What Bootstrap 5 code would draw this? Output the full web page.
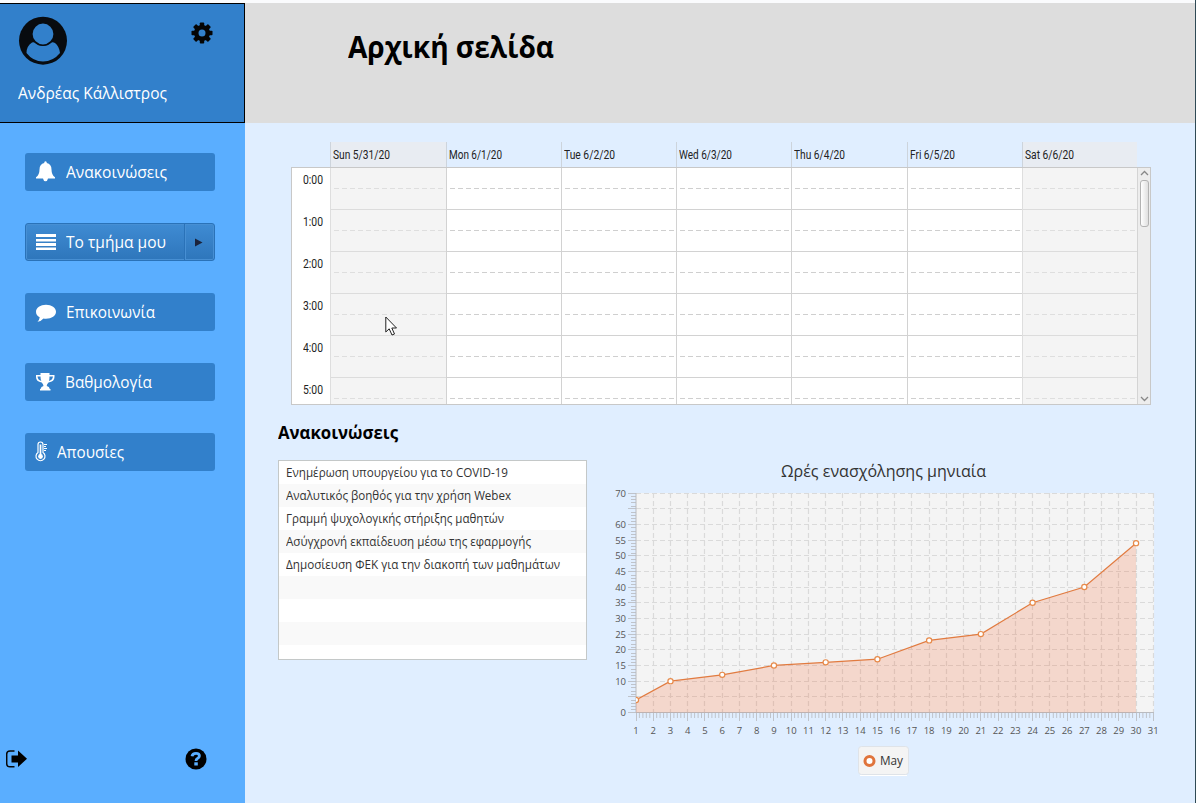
<!DOCTYPE html>
<html lang="el">
<head>
<meta charset="utf-8">
<meta name="viewport" content="width=device-width, initial-scale=1">
<title>Αρχική σελίδα</title>
<link href="https://cdn.jsdelivr.net/npm/bootstrap@5.3.0/dist/css/bootstrap.min.css" rel="stylesheet">
<style>
body{font-family:"Open Sans","Noto Sans",sans-serif;background:#e0eeff;height:803px;overflow:hidden;color:#000;line-height:1}
svg{display:block}
.fit{display:inline-block;white-space:nowrap;transform-origin:0 50%}
.app-shell{height:803px;padding-top:3px;background:#fafbfd;border-right:1px solid #2f4a55}
.side{width:245px;background:#5aaeff}
.profile{height:120px;background:#3280cb;border:1px solid #000;border-left:0;padding:12px 31px 0 18px}
.gear{margin-top:6px}
.user-name{color:#fff;font-size:16px;margin-top:15px;line-height:24px}
.menu-list{padding:30px 30px 0 25px;gap:32px}
.menu-btn{height:38px;background:#3280cb;border:0;border-radius:3px;color:#fff;font-size:16px;padding:0 0 1px 10px;gap:10px;line-height:24px}
.menu-btn:hover{background:#2f78bf;color:#fff}
.menu-split{background:linear-gradient(#3f8bd3,#2e76bb);border:1px solid #2a72b8;box-shadow:inset 0 0 0 1px #478fd3;padding:0 0 0 9px}
.menu-split .fit{margin-top:-1px}
.split-arrow{width:30px;border-left:1px solid #2a72b8;box-shadow:inset 1px 0 0 #478fd3;padding-right:2px}
.side-foot{padding:0 38px 33px 6px}
.page-head{height:120px;background:#ddd;padding:25px 0 0 103px}
.page-head h1{font-size:29.5px;font-weight:700;line-height:38px}
.content{background:#e0eeff;padding-top:19px}
.week{width:860px;margin-left:46px;font-family:Roboto,sans-serif;font-size:12px;color:#222}
.day-row{height:25px;padding-left:39.4px}
.day{width:115.25px;border-left:1px solid #cdd4dc;padding:7px 0 0 2px;white-space:nowrap}
.day.off{background:#e8ecf2}
.week-grid{height:238px;border:1px solid #c8c8c8;background:#fff;overflow:hidden}
.hours{width:38.4px}
.hours div{height:42px;padding:6px 0 0 11px}
.slots{width:115.25px;border-left:1px solid #d2d2d2}
.slots div{height:42px;border-bottom:1px solid #d2d2d2;background:repeating-linear-gradient(90deg,transparent 0 3px,#cfcfcf 3px 8px) 0 20px/100% 1px no-repeat}
.slots.off{background:#f4f4f4;border-color:#dedede}
.slots.off div{border-color:#dcdcdc;background-image:repeating-linear-gradient(90deg,transparent 0 3px,#dedede 3px 8px)}
.scrollbar{width:12.8px;background:#ededed;border-left:1px solid #d4d4d4;padding-top:2px}
.thumb{width:9px;height:47px;border:1px solid #b3b3b3;border-radius:3px;background:linear-gradient(90deg,#fff,#e0e0e0);margin-top:4px}
.news{padding-left:33px;padding-top:17px;width:342px}
.news h2{font-size:17px;font-weight:700;line-height:22px;margin:0 0 16px}
.news-list{height:200px;width:309px;border:1px solid #c4c8c8;background:#fff;overflow:hidden;border-radius:0}
.news-list li{height:23px;flex-shrink:0;font-size:12px;line-height:23px;padding:0 7px;border:0;color:#333;background:#fff;white-space:nowrap}
.news-list li:nth-child(even){background:#f9f9f9}
.chart{width:580px;height:350px;margin:35px 0 0 13px}
.pointer{position:absolute;left:385px;top:316px}
</style>
</head>
<body>
<div class="app-shell d-flex">
<aside class="side d-flex flex-column flex-shrink-0">
  <div class="profile">
    <div class="d-flex justify-content-between">
      <svg width="50" height="50" viewBox="0 0 50 50"><circle cx="25" cy="24.700" r="24" fill="#080b0f"/><path d="M8.500 37Q8.500 30 14 26.500Q16 25.500 18 27.500Q25 32 32 27.500Q34 25.500 37 27Q41 30 42 37Q35 45.500 25 45.500T8.500 37Z" fill="#3280cb"/><circle cx="25" cy="18" r="11.200" fill="#3280cb" stroke="#080b0f" stroke-width="1.600"/></svg>
      <svg class="gear" width="22" height="22" viewBox="-11 -11 22 22"><g fill="#050505"><g id="teeth"><rect x="-2.200" y="-10.500" width="4.400" height="21" rx=".8"/><rect x="-10.500" y="-2.200" width="21" height="4.400" rx=".8"/></g><use href="#teeth" transform="rotate(45)"/><circle r="8"/></g><circle r="3.500" fill="#3280cb"/></svg>
    </div>
    <div class="user-name"><span class="fit" data-w="149">Ανδρέας Κάλλιστρος</span></div>
  </div>
  <nav class="menu-list d-flex flex-column flex-grow-1">
    <button class="menu-btn btn d-flex align-items-center"><svg width="21" height="21" viewBox="0 0 21 21" fill="#fff"><path d="M9.300 1Q10.500-.5 11.700 1V2Q16.500 3 16.500 8.500Q16.500 14 20 16.200V17.500H13Q12.500 20.300 10.500 20.300T8 17.500H1V16.200Q4.500 14 4.500 8.500Q4.500 3 9.300 2Z"/></svg><span class="fit" data-w="101">Ανακοινώσεις</span></button>
    <button class="menu-btn menu-split btn d-flex align-items-stretch"><svg class="align-self-center" width="21" height="17" viewBox="0 0 21 17" fill="#fff"><path d="M1 0H21V3H1ZM1 5H21V7.500H1ZM1 9H21V12H1ZM1 13.500H21V16H1Z"/></svg><span class="align-self-center"><span class="fit" data-w="100">Το τμήμα μου</span></span><span class="split-arrow ms-auto d-flex align-items-center justify-content-center"><svg width="9" height="9" viewBox="0 0 9 9"><path d="M1 .5 8.500 4.500 1 8.500Z" fill="#1b233b"/></svg></span></button>
    <button class="menu-btn btn d-flex align-items-center"><svg width="21" height="20" viewBox="0 0 21 20" fill="#fff"><path d="M11 2C16.600 2 21 5 21 9S16.600 16 11 16Q9.500 16 8.500 15.800Q6.500 18.300 2.500 19Q4.500 17 4.700 14.500Q1 12.500 1 9C1 5 5.400 2 11 2Z" transform="translate(0 .7)"/></svg><span class="fit" data-w="89">Επικοινωνία</span></button>
    <button class="menu-btn btn d-flex align-items-center" style="gap:9px"><svg width="21" height="20" viewBox="0 0 21 20" fill="#fff"><path fill-rule="evenodd" d="M5.500 1H14.500V3H19.500V5Q19.500 9.500 13.500 10.500Q11.800 12 11.700 14Q14.500 14.500 14.800 17H15.500V18.500H5V17H5.500Q6 14.500 8.500 14Q8.400 12 6.700 10.500Q1 9.500 1 5V3H5.500ZM5.500 4.500H2.500Q2.800 8 6.300 9Q5.500 7 5.500 4.500ZM14.500 4.500Q14.500 7 14 9Q17.500 8 18 4.500Z"/></svg><span class="fit" data-w="87">Βαθμολογία</span></button>
    <button class="menu-btn btn d-flex align-items-center"><svg width="12" height="21" viewBox="0 0 12 21"><path d="M3 11.500V3.500Q3 1 5.500 1T8 3.500V11.500A4.500 4.500 0 1 1 3 11.500Z" fill="none" stroke="#fff" stroke-width="1.200"/><path d="M5.500 3.500V14" stroke="#fff" stroke-width="1.700"/><circle cx="5.500" cy="15.500" r="2.400" fill="#fff"/><path d="M9 3.500H12M9 5.500H11M9 7.500H12M9 9.500H11" stroke="#fff"/></svg><span class="fit" data-w="67">Απουσίες</span></button>
  </nav>
  <div class="side-foot d-flex justify-content-between align-items-center">
    <svg width="22" height="20" viewBox="0 0 22 20"><path d="M8.500 2H4Q.7 2 .7 5V14.500Q.7 17.800 4 17.800H8.500" fill="none" stroke="#080808" stroke-width="1.500"/><path d="M5.500 6.500H12V1.500L21 9.800 12 18V13.500H5.500Z"/></svg>
    <svg width="22" height="22" viewBox="0 0 22 22"><circle cx="11" cy="11" r="10.500"/><path d="M7 8.200Q7.500 5.300 11 5.300Q14.400 5.300 14.400 8Q14.400 9.500 12.500 10.400Q11 11.200 11 13" fill="none" stroke="#5aaeff" stroke-width="2.800"/><rect x="9.300" y="14.300" width="3.500" height="3.200" fill="#5aaeff"/></svg>
  </div>
</aside>
<main class="flex-grow-1 d-flex flex-column">
  <header class="page-head"><h1 class="m-0"><span class="fit" data-w="206">Αρχική σελίδα</span></h1></header>
  <div class="content flex-grow-1">
    <section class="week">
      <div class="day-row d-flex" id="days"></div>
      <div class="week-grid d-flex"><div class="hours flex-shrink-0" id="hours"></div><div class="d-flex" id="slots"></div>
        <div class="scrollbar flex-shrink-0 d-flex flex-column align-items-center"><svg width="9" height="6" viewBox="0 0 9 6"><path d="M1 5 4.500 1.500 8 5" fill="none" stroke="#888" stroke-width="1.300"/></svg><div class="thumb"></div><svg class="mt-auto" width="9" height="8" viewBox="0 0 9 8"><path d="M1 1 4.500 4.500 8 1" fill="none" stroke="#888" stroke-width="1.300"/></svg></div>
      </div>
    </section>
    <div class="d-flex">
      <section class="news flex-shrink-0">
        <h2><span class="fit" data-w="120">Ανακοινώσεις</span></h2>
        <ul class="news-list list-group">
          <li class="list-group-item"><span class="fit" data-w="222">Ενημέρωση υπουργείου για το COVID-19</span></li>
          <li class="list-group-item"><span class="fit" data-w="225">Αναλυτικός βοηθός για την χρήση Webex</span></li>
          <li class="list-group-item"><span class="fit" data-w="218">Γραμμή ψυχολογικής στήριξης μαθητών</span></li>
          <li class="list-group-item"><span class="fit" data-w="245">Ασύγχρονή εκπαίδευση μέσω της εφαρμογής</span></li>
          <li class="list-group-item"><span class="fit" data-w="274">Δημοσίευση ΦΕΚ για την διακοπή των μαθημάτων</span></li>
          <li class="list-group-item"></li><li class="list-group-item"></li><li class="list-group-item"></li><li class="list-group-item"></li>
        </ul>
      </section>
      <svg class="chart" id="chart" viewBox="600 440 580 350"></svg>
    </div>
  </div>
</main>
</div>
<svg class="pointer" width="13" height="20" viewBox="0 0 13 20"><path d="M.8 1V16L4.200 12.800 7 19 9.500 18 6.800 12H11.500Z" fill="#fff" stroke="#222"/></svg>
<script>
const dates=['Sun 5/31/20','Mon 6/1/20','Tue 6/2/20','Wed 6/3/20','Thu 6/4/20','Fri 6/5/20','Sat 6/6/20'],dw=[57,53,51,53,51,45,49];
dates.forEach((d,i)=>{const off=i===0||i===6?' off':'';
 days.insertAdjacentHTML('beforeend',`<div class="day${off}"><span class="fit" data-w="${dw[i]}">${d}</span></div>`);
 slots.insertAdjacentHTML('beforeend',`<div class="slots${off}">${'<div></div>'.repeat(6)}</div>`);});
for(let h=0;h<6;h++)hours.insertAdjacentHTML('beforeend',`<div><span class="fit" data-w="20">${h}:00</span></div>`);
// Chart: x axis holds the days of the month, y axis the hours
const X=d=>636+(d-1)*17.243,Y=v=>712.5-v*3.1357;
let s='<rect x="636" y="493" width="518" height="219.500" fill="#f4f4f4"/>',grid='',tick='',lab='';
for(let v=0;v<=70;v++){const y=v%5?Math.round(Y(v))+.5:Math.round(Y(v)-.5)+.5;tick+=`M${v%5?631:628} ${y}H636`;
 if(v%5===0){if(v)grid+=`M636 ${y}H1154`;if(v!==5&&v!==65)lab+=`<text x="626" y="${y+3.7}" text-anchor="end">${v}</text>`}}
for(let d=1;d<=31;d++){const x=Math.round(X(d)-.5)+.5;if(d>1)grid+=`M${x} 493V712`;tick+=`M${x} 713V721`;
 if(d<31)for(let k=1;k<5;k++)tick+=`M${(X(d+k/5)).toFixed(1)} 713V718`;
 lab+=`<text x="${X(d)}" y="734" text-anchor="middle">${d}</text>`}
const pts=[[1,4],[3,10],[6,12],[9,15],[12,16],[15,17],[18,23],[21,25],[24,35],[27,40],[30,54]].map(p=>[X(p[0]),Y(p[1])]);
const line=pts.map(p=>p.join(' ')).join('L');
s+=`<path d="${grid}" stroke="#dadada" stroke-width="1.200" stroke-dasharray="5 3"/><path d="${tick}" stroke="#bfc3ca"/><path d="M636 493V712.500H1154" fill="none" stroke="#b9bbc0"/>`;
s+=`<clipPath id="plot"><rect x="636" y="488" width="520" height="226"/></clipPath><g clip-path="url(#plot)"><path d="M${line}V712.500H636Z" fill="#f3622d" fill-opacity=".2"/><path d="M${line}" fill="none" stroke="#e17b40" stroke-width="1.200"/>`;
s+=pts.map(p=>`<circle cx="${p[0]}" cy="${p[1]}" r="2.600" fill="#fff" stroke="#e78a4a" stroke-width="1.200"/>`).join('')+'</g>';
s+=`<g font-size="9.500" fill="#555">${lab}</g><text x="781" y="477" font-size="16" fill="#333" textLength="205" lengthAdjust="spacingAndGlyphs">Ωρές ενασχόλησης μηνιαία</text>`;
s+=`<rect x="858.500" y="746.500" width="50" height="28" rx="3" fill="#f4f4f4" stroke="#dfe3e8"/><path d="M860 775.500H907" stroke="#fff"/><circle cx="869.500" cy="761" r="4.500" fill="#fff" stroke="#e0743c" stroke-width="3"/><text x="880" y="765" font-size="12" fill="#333" textLength="23" lengthAdjust="spacingAndGlyphs">May</text>`;
chart.innerHTML=s;
document.fonts.ready.then(()=>document.querySelectorAll('.fit').forEach(e=>e.style.transform=`scaleX(${e.dataset.w/e.getBoundingClientRect().width})`));
</script>
<script src="https://cdn.jsdelivr.net/npm/bootstrap@5.3.0/dist/js/bootstrap.bundle.min.js"></script>
</body>
</html>
